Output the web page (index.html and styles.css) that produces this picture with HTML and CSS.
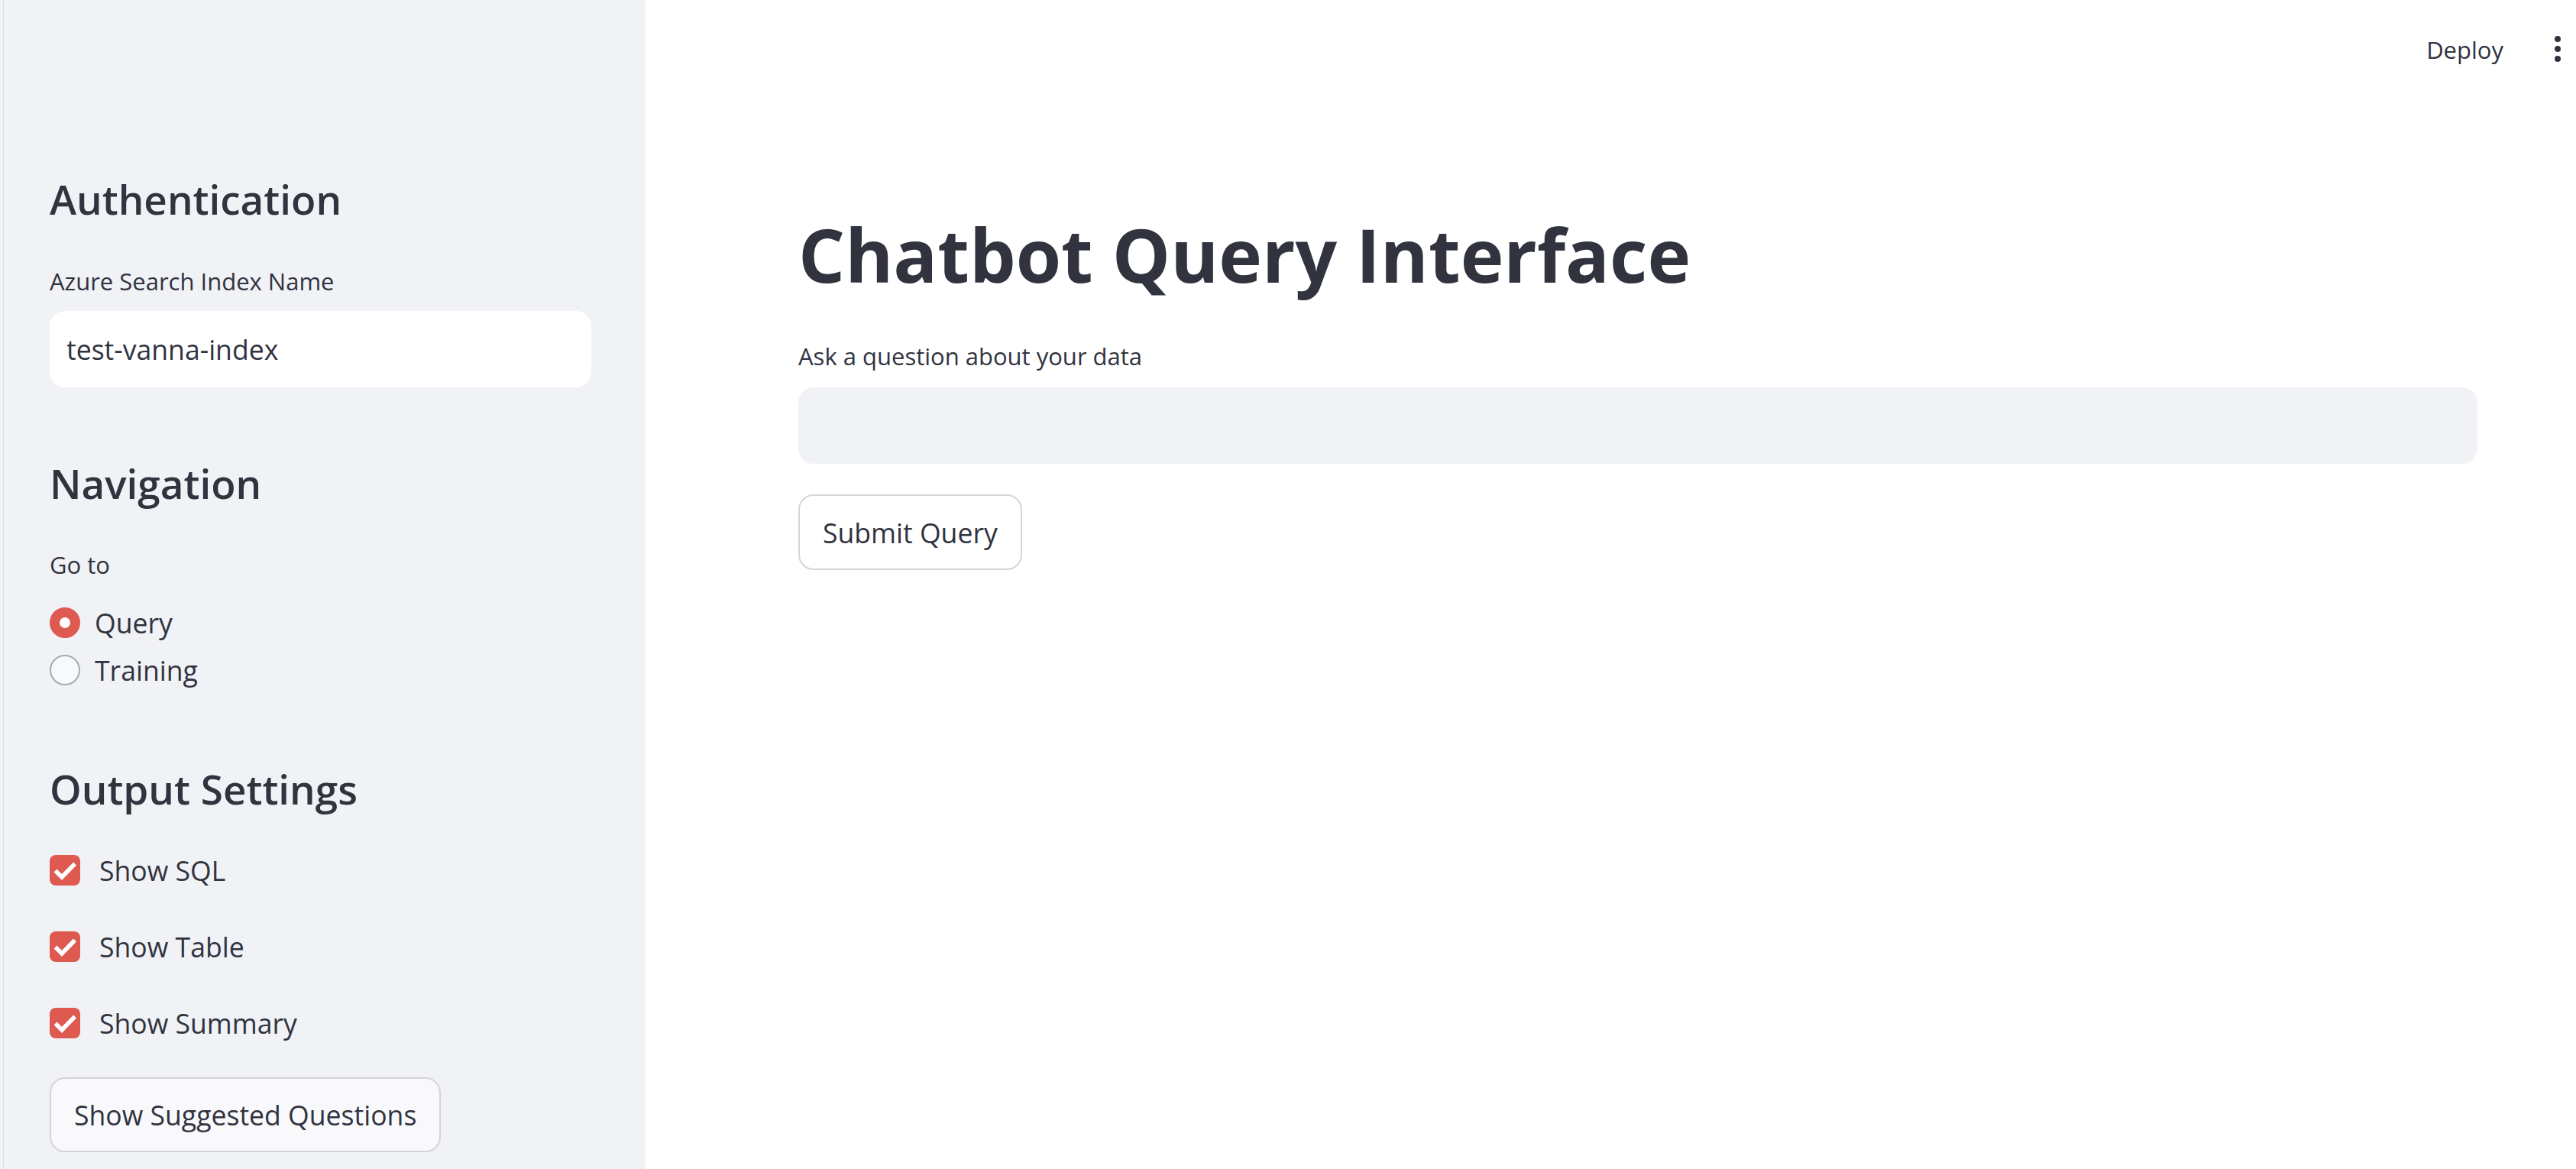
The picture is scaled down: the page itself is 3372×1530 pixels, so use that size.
FILE: index.html
```html
<!DOCTYPE html>
<html lang="en">
<head>
<meta charset="utf-8">
<title>Chatbot Query Interface</title>
<link rel="stylesheet" href="styles.css">
</head>
<body>
<div class="app">
  <aside class="sidebar">
    <h2 class="side-h h-auth">Authentication</h2>
    <label class="field-label l-azure">Azure Search Index Name</label>
    <div class="side-input">test-vanna-index</div>

    <h2 class="side-h h-nav">Navigation</h2>
    <div class="field-label l-goto">Go to</div>
    <div class="radio-group">
      <div class="radio-row">
        <span class="radio checked"></span>
        <span class="opt-text">Query</span>
      </div>
      <div class="radio-row">
        <span class="radio"></span>
        <span class="opt-text">Training</span>
      </div>
    </div>

    <h2 class="side-h h-out">Output Settings</h2>
    <div class="check-list">
      <div class="check-row">
        <span class="checkbox"><svg viewBox="0 0 40 40" width="40" height="40"><path d="M7.5 20.5 L16 29 L33 11.5" fill="none" stroke="#fff" stroke-width="5.5"/></svg></span>
        <span class="opt-text">Show SQL</span>
      </div>
      <div class="check-row">
        <span class="checkbox"><svg viewBox="0 0 40 40" width="40" height="40"><path d="M7.5 20.5 L16 29 L33 11.5" fill="none" stroke="#fff" stroke-width="5.5"/></svg></span>
        <span class="opt-text">Show Table</span>
      </div>
      <div class="check-row">
        <span class="checkbox"><svg viewBox="0 0 40 40" width="40" height="40"><path d="M7.5 20.5 L16 29 L33 11.5" fill="none" stroke="#fff" stroke-width="5.5"/></svg></span>
        <span class="opt-text">Show Summary</span>
      </div>
    </div>
    <button class="btn side-btn">Show Suggested Questions</button>
  </aside>

  <main class="main">
    <header class="topbar">
      <span class="deploy">Deploy</span>
      <svg class="kebab" viewBox="0 0 8 34" width="8" height="34"><circle cx="4" cy="4" r="4" fill="#31333f"/><circle cx="4" cy="17" r="4" fill="#31333f"/><circle cx="4" cy="30" r="4" fill="#31333f"/></svg>
    </header>
    <section class="content">
      <h1 class="title">Chatbot Query Interface</h1>
      <div class="field-label l-ask">Ask a question about your data</div>
      <div class="main-input"></div>
      <button class="btn submit-btn">Submit Query</button>
    </section>
  </main>
</div>
</body>
</html>
```
FILE: styles.css
```css
* { box-sizing: border-box; }
html, body { margin: 0; padding: 0; }
body {
  font-family: "Source Sans Pro", "Open Sans", sans-serif;
  color: #31333f;
  background: #ffffff;
  overflow: hidden;
}
.app {
  display: flex;
  height: 1530px;
}

/* ---------- sidebar ---------- */
.sidebar {
  width: 845px;
  flex: none;
  display: flex;
  flex-direction: column;
  align-items: flex-start;
  padding: 0 71px 0 65px;
  background: linear-gradient(to right, #f0f2f6 4px, #dcdde2 4px, #dcdde2 5px, #f0f2f6 5px);
}
.side-h {
  margin: 0;
  font-size: 53px;
  font-weight: 600;
  line-height: 64px;
}
.h-auth { margin-top: 229px; }
.h-nav { margin-top: 94px; }
.h-out { margin-top: 93px; }

.field-label {
  display: block;
  font-size: 31px;
  line-height: 40px;
}
.l-azure { margin-top: 55px; }
.l-goto { margin-top: 54px; }

.side-input {
  margin-top: 19px;
  width: 100%;
  height: 100px;
  background: #ffffff;
  border-radius: 20px;
  display: flex;
  align-items: center;
  padding-left: 22px;
  font-size: 35.6px;
}

.radio-group {
  margin-top: 25px;
  display: flex;
  flex-direction: column;
}
.radio-row, .check-row {
  display: flex;
  align-items: center;
  height: 62px;
}
.opt-text {
  font-size: 35.6px;
  line-height: 62px;
}
.radio {
  width: 40px;
  height: 40px;
  border-radius: 50%;
  border: 2.5px solid #a7aab3;
  background: #f8f9fb;
  margin-right: 19px;
  flex: none;
}
.radio.checked {
  border: 13.5px solid #de5a51;
  background: #ffffff;
}

.check-list {
  margin-top: 44px;
  display: flex;
  flex-direction: column;
  gap: 40px;
}
.check-row { height: 60px; }
.check-row .opt-text { line-height: 60px; }
.checkbox {
  width: 40px;
  height: 40px;
  border-radius: 8px;
  background: #de5a51;
  margin-right: 25px;
  flex: none;
  display: block;
}
.checkbox svg { display: block; }

.btn {
  font-family: inherit;
  color: #31333f;
  font-size: 35.6px;
  border: 2.5px solid #d4d5da;
  border-radius: 20px;
  height: 98px;
  padding: 0 30px;
  display: flex;
  align-items: center;
  cursor: pointer;
}
.side-btn {
  margin-top: 41px;
  background: #f9f9fb;
}

/* ---------- main ---------- */
.main {
  flex: 1;
  display: flex;
  flex-direction: column;
  min-width: 0;
}
.topbar {
  height: 115px;
  display: flex;
  justify-content: flex-end;
  align-items: flex-start;
  padding-right: 20px;
}
.deploy {
  margin-top: 45px;
  font-size: 31px;
  line-height: 40px;
  margin-right: 67px;
}
.kebab {
  margin-top: 47px;
  display: block;
}
.content {
  display: flex;
  flex-direction: column;
  align-items: flex-start;
  padding: 0 129px 0 200px;
}
.title {
  margin: 163px 0 0 0;
  font-size: 96px;
  font-weight: 700;
  line-height: 110px;
}
.l-ask { margin-top: 58px; }
.main-input {
  margin-top: 21px;
  width: 100%;
  height: 100px;
  background: #f0f2f6;
  border-radius: 20px;
}
.submit-btn {
  margin-top: 40px;
  height: 99px;
  background: #ffffff;
}
```
